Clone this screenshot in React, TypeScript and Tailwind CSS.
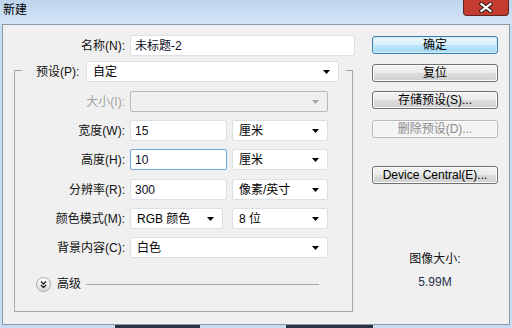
import React from "react";

const Arrow = ({ color = "#000" }: { color?: string }) => (
  <svg width="7" height="4" viewBox="0 0 7 4" className="shrink-0">
    <path d="M0 0H7L3.5 4Z" fill={color} />
  </svg>
);

const Field = ({ w, text, focus }: { w: string; text: string; focus?: boolean }) => (
  <div
    className={`${w} h-[21px] bg-white rounded-[2px] border ${
      focus ? "border-[#6fa8dc]" : "border-[#dcdfe4]"
    } flex items-center pl-[4px] text-[12px] text-[#0b0b24]`}
  >
    {text}
  </div>
);

const Select = ({ w, text, disabled }: { w: string; text: string; disabled?: boolean }) => (
  <div
    className={`${w} h-[21px] rounded-[2px] border ${
      disabled ? "border-[#b9b9b9] bg-[#f0f0f0]" : "border-[#dcdfe4] bg-white"
    } flex items-center pl-[6px] pr-[8px] text-[12px] text-black`}
  >
    <span className="flex-1">{text}</span>
    <Arrow color={disabled ? "#a5a5a5" : "#000"} />
  </div>
);

const Label = ({ children, disabled }: { children: React.ReactNode; disabled?: boolean }) => (
  <div
    className={`w-[110px] mr-[5px] text-right text-[12px] ${
      disabled ? "text-[#a3a3a3]" : "text-[#111]"
    }`}
  >
    {children}
  </div>
);

const Btn = ({
  children,
  def,
  disabled,
  className = "",
}: {
  children: React.ReactNode;
  def?: boolean;
  disabled?: boolean;
  className?: string;
}) => (
  <div
    className={`h-[18px] w-[126px] rounded-[3px] border flex items-center justify-center text-[12px] leading-none ${
      disabled
        ? "border-[#b5b8bb] bg-[#f4f4f4] text-[#8c8c8c] shadow-[inset_0_0_0_1px_#fbfbfb]"
        : def
        ? "border-[#3c7fb1] bg-[linear-gradient(#eaf6fd,#d9f0fc_50%,#bee6fd_50%,#a7d9f5)] text-black shadow-[inset_0_0_0_1px_#d2ecfa]"
        : "border-[#707070] bg-[linear-gradient(#f2f2f2,#ebebeb_50%,#dddddd_50%,#cfcfcf)] text-black shadow-[inset_0_0_0_1px_#fcfcfc]"
    } ${className}`}
  >
    {children}
  </div>
);

const CloseBtn = () => (
  <div className="ml-auto mr-[3px] w-[46px] h-[16px] shrink-0 rounded-b-[4px] bg-[#c43c30] border-x border-b border-[#5e2520] flex items-center justify-center">
    <svg width="14" height="11" viewBox="0 0 14 11" className="block">
      <path d="M2.5 2L11.5 9M11.5 2L2.5 9" stroke="#3d1a18" strokeWidth="4.2" strokeLinecap="square" />
      <path d="M2.5 2L11.5 9M11.5 2L2.5 9" stroke="#ffffff" strokeWidth="2.2" strokeLinecap="square" />
    </svg>
  </div>
);

export default function App() {
  return (
    <div className="w-[512px] h-[328px] overflow-hidden flex flex-col bg-[#c8ddf2] font-['Liberation_Sans','Noto_Sans_CJK_SC',sans-serif]">
      {/* Title bar */}
      <div className="h-[24px] shrink-0 flex items-start bg-linear-to-b from-[#bcd4ec] to-[#d4e6f8]">
        <div className="pl-[3px] pt-[3px] text-[12px] leading-[14px] text-black">新建</div>
        <CloseBtn />
      </div>

      {/* Client area */}
      <div className="ml-[2px] w-[508px] h-[301px] shrink-0 border border-[#8a99a8] bg-[#f0f0f0] flex pl-[11px]">
        {/* Left column */}
        <div className="w-[344px] flex flex-col">
          <div className="mt-[10px] h-[21px] flex items-center">
            <div className="w-[111px] mr-[5px] text-right text-[12px] text-[#111]">名称(N):</div>
            <Field w="w-[225px]" text="未标题-2" />
          </div>

          <div className="mt-[14px] w-[339px] h-[242px] border border-[#a8a8a8] flex flex-col">
            <div className="-mt-[10px] ml-[7px] w-[324px] h-[21px] bg-[#f0f0f0] flex items-center">
              <div className="w-[64px] pl-[14px] text-[12px] text-[#111]">预设(P):</div>
              <Select w="w-[253px]" text="自定" />
            </div>

            <div className="mt-[9px] h-[21px] flex items-center">
              <Label disabled>大小(I):</Label>
              <Select w="w-[198px]" text="" disabled />
            </div>

            <div className="mt-[8px] h-[21px] flex items-center">
              <Label>宽度(W):</Label>
              <Field w="w-[97px]" text="15" />
              <div className="ml-[5px]">
                <Select w="w-[96px]" text="厘米" />
              </div>
            </div>

            <div className="mt-[8px] h-[21px] flex items-center">
              <Label>高度(H):</Label>
              <Field w="w-[97px]" text="10" focus />
              <div className="ml-[5px]">
                <Select w="w-[96px]" text="厘米" />
              </div>
            </div>

            <div className="mt-[9px] h-[21px] flex items-center">
              <Label>分辨率(R):</Label>
              <Field w="w-[97px]" text="300" />
              <div className="ml-[5px]">
                <Select w="w-[96px]" text="像素/英寸" />
              </div>
            </div>

            <div className="mt-[8px] h-[21px] flex items-center">
              <Label>颜色模式(M):</Label>
              <Select w="w-[93px]" text="RGB 颜色" />
              <div className="ml-[9px]">
                <Select w="w-[96px]" text="8 位" />
              </div>
            </div>

            <div className="mt-[8px] h-[21px] flex items-center">
              <Label>背景内容(C):</Label>
              <Select w="w-[198px]" text="白色" />
            </div>

            <div className="mt-[18px] h-[16px] flex items-center">
              <svg width="15" height="15" viewBox="0 0 15 15" className="ml-[21px]">
                <defs>
                  <linearGradient id="g" x1="0" y1="0" x2="0" y2="1">
                    <stop offset="0" stopColor="#ffffff" />
                    <stop offset="1" stopColor="#d9d9d9" />
                  </linearGradient>
                </defs>
                <circle cx="7.5" cy="7.5" r="7" fill="url(#g)" stroke="#a9a9a9" />
                <path d="M5 4.5L7.5 7L10 4.5M5 8L7.5 10.5L10 8" fill="none" stroke="#222" strokeWidth="1.4" />
              </svg>
              <span className="ml-[6px] text-[12px] text-[#111]">高级</span>
              <div className="ml-[5px] w-[233px] h-px bg-[#a8a8a8]" />
            </div>
          </div>
        </div>

        {/* Right column */}
        <div className="ml-[14px] w-[126px] flex flex-col items-center">
          <Btn def className="mt-[11px]">确定</Btn>
          <Btn className="mt-[10px]">复位</Btn>
          <Btn className="mt-[9px]">存储预设(S)...</Btn>
          <Btn disabled className="mt-[11px]">删除预设(D)...</Btn>
          <Btn className="mt-[28px]">Device Central(E)...</Btn>
          <div className="mt-[67px] text-[12px] leading-[16px] text-[#111]">图像大小:</div>
          <div className="mt-[7px] text-[12px] leading-[16px] text-[#1e2f4c]">5.99M</div>
        </div>
      </div>

      {/* Bottom frame */}
      <div className="h-[3px] shrink-0 flex">
        <div className="w-[115px] bg-[#c8ddf2]" />
        <div className="w-[85px] bg-[#2b3442]" />
        <div className="w-[86px] bg-[#c8ddf2]" />
        <div className="w-[87px] bg-[#2b3442]" />
        <div className="flex-1 bg-[#c8ddf2]" />
      </div>
    </div>
  );
}
